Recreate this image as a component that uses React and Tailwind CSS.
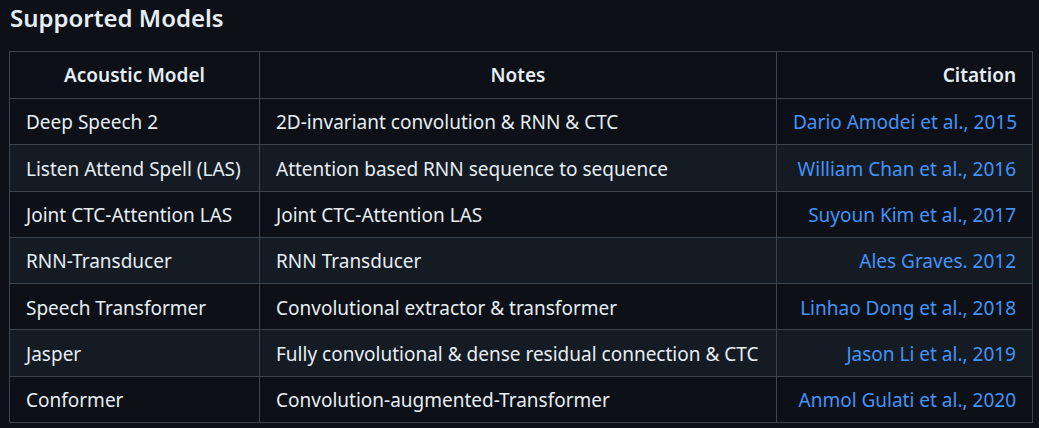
import React from "react";

const rows = [
  ["Deep Speech 2", "2D-invariant convolution & RNN & CTC", "Dario Amodei et al., 2015"],
  ["Listen Attend Spell (LAS)", "Attention based RNN sequence to sequence", "William Chan et al., 2016"],
  ["Joint CTC-Attention LAS", "Joint CTC-Attention LAS", "Suyoun Kim et al., 2017"],
  ["RNN-Transducer", "RNN Transducer", "Ales Graves. 2012"],
  ["Speech Transformer", "Convolutional extractor & transformer", "Linhao Dong et al., 2018"],
  ["Jasper", "Fully convolutional & dense residual connection & CTC", "Jason Li et al., 2019"],
  ["Conformer", "Convolution-augmented-Transformer", "Anmol Gulati et al., 2020"],
];

const App = () => {
  return (
    <div
      className="w-[1039px] h-[428px] bg-[#0d1117] text-[#e6edf3] overflow-hidden pl-[9px]"
      style={{ fontFamily: '"Noto Sans", "Open Sans", sans-serif' }}
    >
      <h3 className="text-[24px] font-semibold leading-[34px] pt-[1px] pl-[1px]">Supported Models</h3>
      <table className="mt-[16px] border-collapse text-[19px] w-[1023px] table-fixed">
        <colgroup>
          <col className="w-[250px]" />
          <col className="w-[517px]" />
          <col className="w-[256px]" />
        </colgroup>
        <thead>
          <tr className="h-[47px]">
            <th className="border border-[#3d444d] px-4 font-semibold text-center">Acoustic Model</th>
            <th className="border border-[#3d444d] px-4 font-semibold text-center">Notes</th>
            <th className="border border-[#3d444d] px-4 font-semibold text-right">Citation</th>
          </tr>
        </thead>
        <tbody>
          {rows.map((r, i) => (
            <tr key={i} className={i % 2 === 1 ? "h-[46.3px] bg-[#151b23]" : "h-[46.3px]"}>
              <td className="border border-[#3d444d] px-4 pt-[2px] whitespace-nowrap">{r[0]}</td>
              <td className="border border-[#3d444d] px-4 pt-[2px] whitespace-nowrap">{r[1]}</td>
              <td className="border border-[#3d444d] px-4 pt-[2px] text-right whitespace-nowrap text-[#4493f8]">
                <a href="#">{r[2]}</a>
              </td>
            </tr>
          ))}
        </tbody>
      </table>
    </div>
  );
};

export default App;
